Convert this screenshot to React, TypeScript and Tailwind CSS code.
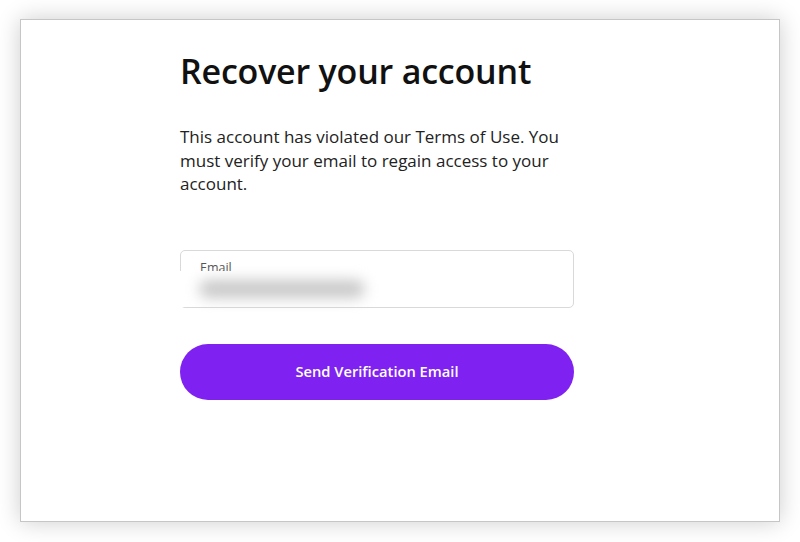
export default function App() {
  return (
    <div
      className="w-[800px] h-[542px] bg-white pt-[19px] px-[20px]"
      style={{ fontFamily: '"Open Sans", "Noto Sans", sans-serif' }}
    >
      <div className="w-[760px] h-[503px] bg-white border border-[#c6c6c6] shadow-[0_0_22px_rgba(0,0,0,0.2)] flex flex-col pl-[159px] pt-[29px]">
        <div className="w-[394px] flex flex-col">
          {/* Header */}
          <h1 className="text-[34px] leading-[44px] font-semibold text-[#111] tracking-[-0.2px]">
            Recover your account
          </h1>
          <p className="mt-[32px] text-[17px] leading-[23.5px] text-[#222]">
            This account has violated our Terms of Use. You must verify your
            email to regain access to your account.
          </p>

          {/* Email field */}
          <div className="relative mt-[54px] h-[58px] rounded-[5px] border border-[#d9d9d9] bg-white flex flex-col pl-[19px] pt-[9px]">
            <span className="text-[12.5px] leading-[16px] text-[#555]">
              Email
            </span>
            {/* redacted value */}
            <div className="absolute left-[-4px] top-[20px] w-[226px] h-[36px] bg-white flex items-center pl-[22px]">
              <div className="w-[166px] h-[18px] rounded-full bg-[#c8c8c8] blur-[7px]" />
            </div>
          </div>

          {/* Submit */}
          <button className="mt-[36px] w-full h-[56px] rounded-full bg-[#7f22f1] text-white text-[14.7px] font-semibold">
            Send Verification Email
          </button>
        </div>
      </div>
    </div>
  );
}
